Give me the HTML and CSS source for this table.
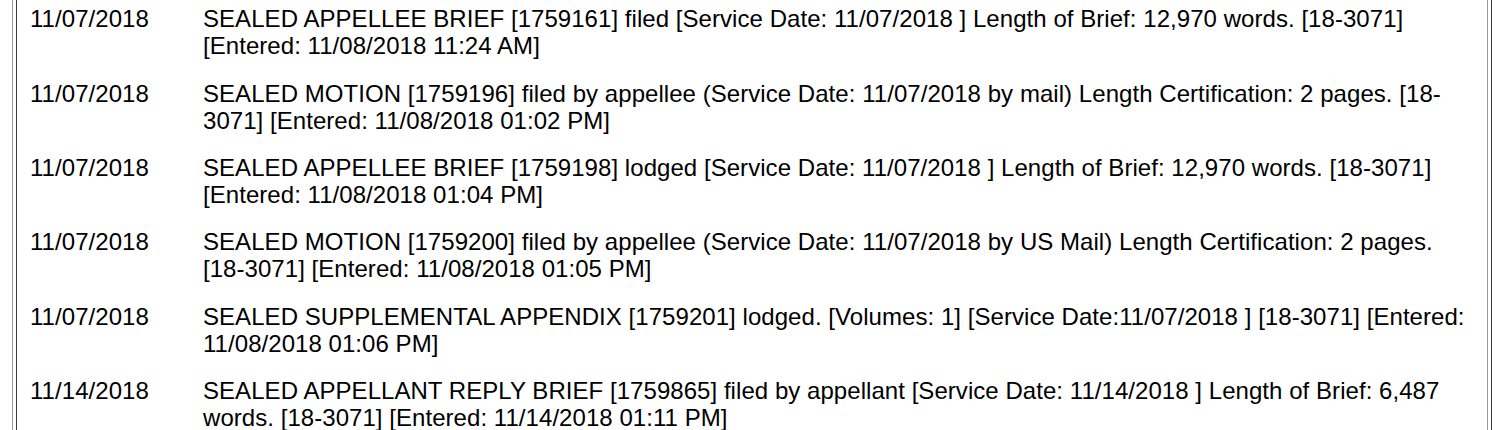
FILE: index.html
```html
<!DOCTYPE html>
<html lang="en">
<head>
<meta charset="utf-8">
<title>Docket entries</title>
<link rel="stylesheet" href="styles.css">
</head>
<body>
<div class="frame">
  <div class="cell">
    <div class="entry">
      <div class="date">11/07/2018</div>
      <div class="desc">SEALED APPELLEE BRIEF [1759161] filed [Service Date: 11/07/2018 ] Length of Brief: 12,970 words. [18-3071] [Entered: 11/08/2018 11:24 AM]</div>
    </div>
    <div class="entry">
      <div class="date">11/07/2018</div>
      <div class="desc">SEALED MOTION [1759196] filed by appellee (Service Date: 11/07/2018 by mail) Length Certification: 2 pages. [18-3071] [Entered: 11/08/2018 01:02 PM]</div>
    </div>
    <div class="entry">
      <div class="date">11/07/2018</div>
      <div class="desc">SEALED APPELLEE BRIEF [1759198] lodged [Service Date: 11/07/2018 ] Length of Brief: 12,970 words. [18-3071] [Entered: 11/08/2018 01:04 PM]</div>
    </div>
    <div class="entry">
      <div class="date">11/07/2018</div>
      <div class="desc">SEALED MOTION [1759200] filed by appellee (Service Date: 11/07/2018 by US Mail) Length Certification: 2 pages. [18-3071] [Entered: 11/08/2018 01:05 PM]</div>
    </div>
    <div class="entry">
      <div class="date">11/07/2018</div>
      <div class="desc">SEALED SUPPLEMENTAL APPENDIX [1759201] lodged. [Volumes: 1] [Service Date:11/07/2018 ] [18-3071] [Entered: 11/08/2018 01:06 PM]</div>
    </div>
    <div class="entry">
      <div class="date">11/14/2018</div>
      <div class="desc">SEALED APPELLANT REPLY BRIEF [1759865] filed by appellant [Service Date: 11/14/2018 ] Length of Brief: 6,487 words. [18-3071] [Entered: 11/14/2018 01:11 PM]</div>
    </div>
  </div>
</div>
</body>
</html>
```
FILE: styles.css
```css
html, body {
  margin: 0;
  padding: 0;
  background: #ffffff;
  overflow: hidden;
}

body {
  font-family: "Liberation Sans", Arial, Helvetica, sans-serif;
  font-size: 24px;
  line-height: 27px;
  letter-spacing: 0.05px;
  color: #000000;
}

.frame {
  margin: -5px 8px 0 12px;
  border-left: 1px solid #9a9a9a;
  border-right: 1px solid #3c3c3c;
  padding: 0 3px;
}

.cell {
  border-left: 1px solid #3c3c3c;
  border-right: 1px solid #9a9a9a;
  padding: 0 16px 0 13px;
}

.entry {
  display: grid;
  grid-template-columns: 173px 1fr;
  padding: 10.2px 0;
}

.date {
  white-space: nowrap;
}
```
